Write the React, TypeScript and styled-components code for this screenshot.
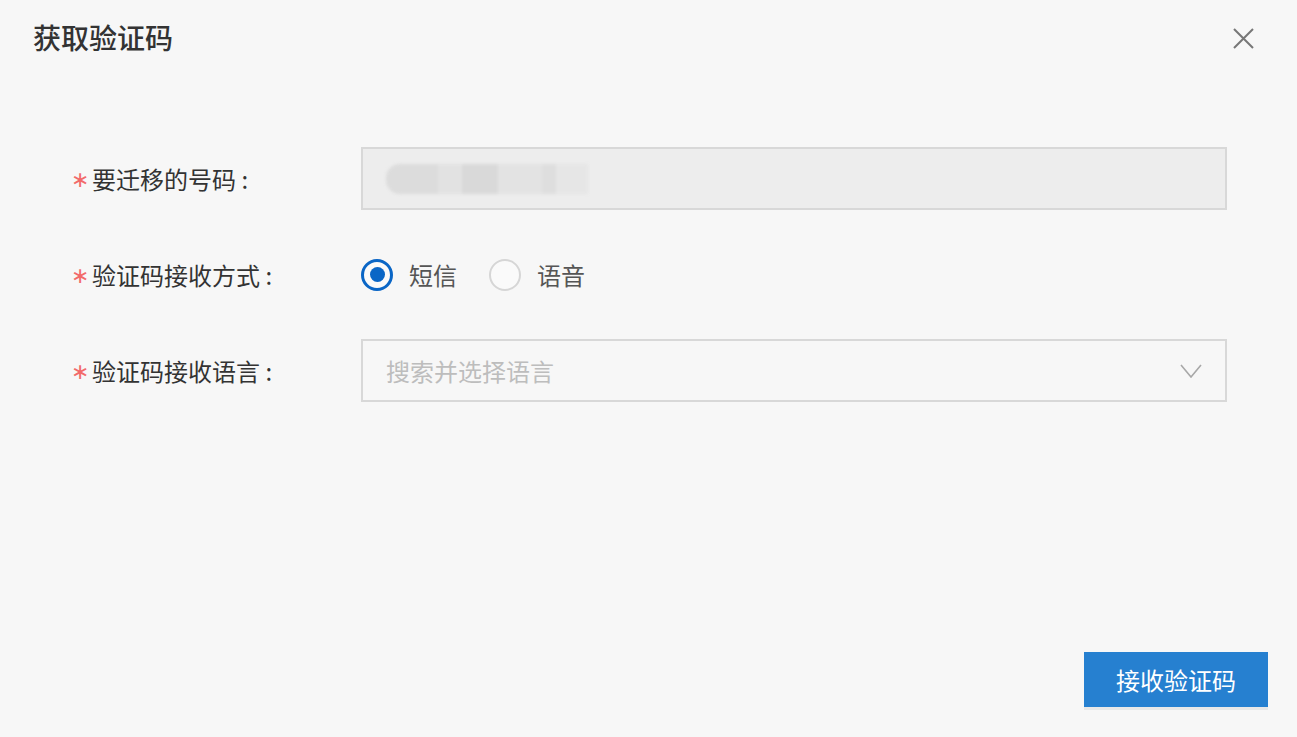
import React from "react";
import styled, { createGlobalStyle } from "styled-components";

const GlobalStyle = createGlobalStyle`
  html, body {
    margin: 0;
    padding: 0;
    background: #f7f7f7;
  }
  body {
    font-family: "Noto Sans CJK SC", "Noto Sans", sans-serif;
    color: #333;
  }
  * { box-sizing: border-box; }
`;

const Dialog = styled.div`
  width: 1297px;
  height: 737px;
  display: flex;
  flex-direction: column;
  background: #f7f7f7;
`;

const Header = styled.div`
  height: 74px;
  display: flex;
  align-items: center;
  justify-content: space-between;
  padding: 0 43px 0 33px;
`;

const Title = styled.h2`
  margin: 0;
  font-size: 28px;
  font-weight: 500;
  line-height: 1;
  color: #333;
  letter-spacing: 0;
`;

const CloseButton = styled.button`
  width: 21px;
  height: 21px;
  padding: 0;
  border: none;
  background: transparent;
  display: flex;
  cursor: pointer;
  margin-top: 3px;
`;

const Form = styled.div`
  margin-top: 73px;
  display: flex;
  flex-direction: column;
  gap: 33px;
`;

const Row = styled.div`
  display: flex;
  align-items: center;
  height: 63px;
`;

const Label = styled.div`
  width: 361px;
  padding-left: 72px;
  display: flex;
  align-items: center;
  font-size: 24px;
  line-height: 1;
  color: #333;
`;

const Required = styled.span`
  width: 21px;
  color: #f26a6a;
  font-family: "DejaVu Sans", sans-serif;
  font-size: 22px;
  line-height: 24px;
  margin-left: -1px;
  padding-top: 2px;
`;

const Control = styled.div`
  width: 866px;
  height: 100%;
  display: flex;
  align-items: center;
`;

const Field = styled.div<{ $disabled?: boolean }>`
  width: 100%;
  height: 63px;
  border: 2px solid #d8d8d8;
  background: ${(p) => (p.$disabled ? "#ededed" : "transparent")};
  display: flex;
  align-items: center;
  justify-content: space-between;
  padding: 0 23px;
  font-size: 24px;
`;

const Mosaic = styled.div`
  display: flex;
  height: 30px;
  filter: blur(1.5px);
`;

const MosaicBlock = styled.div<{ $w: number; $c: string; $round?: boolean }>`
  width: ${(p) => p.$w}px;
  height: 100%;
  background: ${(p) => p.$c};
  border-radius: ${(p) => (p.$round ? "14px 0 0 14px" : "0")};
`;

const Placeholder = styled.span`
  color: #bdbdbd;
  font-size: 24px;
  line-height: 1;
`;

const RadioGroup = styled.div`
  display: flex;
  align-items: center;
  gap: 32px;
`;

const RadioOption = styled.label`
  display: flex;
  align-items: center;
  gap: 16px;
  font-size: 24px;
  line-height: 1;
  color: #555;
  cursor: pointer;
`;

const RadioCircle = styled.span<{ $checked?: boolean }>`
  width: 32px;
  height: 32px;
  border-radius: 50%;
  border: ${(p) => (p.$checked ? "3px solid #0a66c6" : "2px solid #d6d6d6")};
  background: #fafafa;
  display: flex;
  align-items: center;
  justify-content: center;
  &::after {
    content: "";
    display: ${(p) => (p.$checked ? "block" : "none")};
    width: 15px;
    height: 15px;
    border-radius: 50%;
    background: #0a66c6;
  }
`;

const Footer = styled.div`
  margin-top: auto;
  display: flex;
  justify-content: flex-end;
  padding: 0 29px 30px 0;
`;

const PrimaryButton = styled.button`
  width: 184px;
  height: 55px;
  border: none;
  background: #2680d0;
  color: #fff;
  font-family: "Noto Sans CJK SC", "Noto Sans", sans-serif;
  font-size: 24px;
  line-height: 1;
  cursor: pointer;
  box-shadow: 0 3px 0 rgba(0, 0, 0, 0.06);
`;

const mosaic = [
  { w: 52, c: "#dcdcdc", round: true },
  { w: 24, c: "#e2e2e2" },
  { w: 36, c: "#d9d9d9" },
  { w: 44, c: "#e3e3e3" },
  { w: 14, c: "#dedede" },
  { w: 32, c: "#e6e6e6" },
];

export default function App() {
  return (
    <>
      <GlobalStyle />
      <Dialog>
        <Header>
          <Title>获取验证码</Title>
          <CloseButton aria-label="close">
            <svg width="21" height="21" viewBox="0 0 21 21">
              <path d="M1 1 L20 20 M20 1 L1 20" stroke="#777" strokeWidth="2" fill="none" />
            </svg>
          </CloseButton>
        </Header>
        <Form>
          <Row>
            <Label>
              <Required>∗</Required>要迁移的号码 :
            </Label>
            <Control>
              <Field $disabled>
                <Mosaic>
                  {mosaic.map((m, i) => (
                    <MosaicBlock key={i} $w={m.w} $c={m.c} $round={m.round} />
                  ))}
                </Mosaic>
              </Field>
            </Control>
          </Row>
          <Row>
            <Label>
              <Required>∗</Required>验证码接收方式 :
            </Label>
            <Control>
              <RadioGroup>
                <RadioOption>
                  <RadioCircle $checked />
                  短信
                </RadioOption>
                <RadioOption>
                  <RadioCircle />
                  语音
                </RadioOption>
              </RadioGroup>
            </Control>
          </Row>
          <Row>
            <Label>
              <Required>∗</Required>验证码接收语言 :
            </Label>
            <Control>
              <Field>
                <Placeholder>搜索并选择语言</Placeholder>
                <svg width="22" height="14" viewBox="0 0 22 14">
                  <path d="M1 1 L11 13 L21 1" stroke="#a8a8a8" strokeWidth="1.6" fill="none" />
                </svg>
              </Field>
            </Control>
          </Row>
        </Form>
        <Footer>
          <PrimaryButton>接收验证码</PrimaryButton>
        </Footer>
      </Dialog>
    </>
  );
}
